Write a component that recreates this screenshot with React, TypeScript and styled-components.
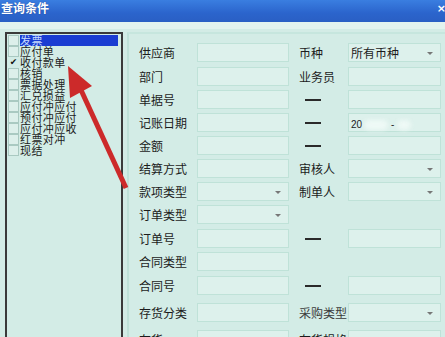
import styled, { createGlobalStyle } from 'styled-components';

const GlobalStyle = createGlobalStyle`
  html, body {
    margin: 0;
    padding: 0;
    background: #d3ece6;
    overflow: hidden;
  }
`;

const Window = styled.div`
  position: relative;
  width: 445px;
  height: 337px;
  overflow: hidden;
  background: #d3ece6;
  font-family: "Noto Sans CJK SC", "Noto Sans", sans-serif;
  color: #1c1c1c;
`;

const TitleBar = styled.div`
  height: 22px;
  display: flex;
  align-items: flex-start;
  justify-content: space-between;
  background: linear-gradient(#3a7ee0, #2b64cc 60%, #2a5fc4);
  color: #fff;
`;

const Title = styled.span`
  font-size: 12px;
  font-weight: bold;
  line-height: 16px;
  padding-left: 1px;
  text-shadow: 0 0 1px #1a3f8a;
`;

const Close = styled.span`
  font-family: "DejaVu Sans", sans-serif;
  font-size: 11px;
  font-weight: bold;
  line-height: 18px;
  margin-right: -1px;
`;

const Body = styled.div`
  display: flex;
  align-items: flex-start;
  padding-top: 10px;
  background: linear-gradient(#e3f3ef 0 7px, #d3ece6 7px);
`;

const ListBox = styled.div`
  margin-left: 5px;
  width: 113px;
  height: 320px;
  border: 2px solid #3a3a3a;
  border-bottom: none;
  padding: 1px 0 0 1px;
  display: flex;
  flex-direction: column;
`;

const Item = styled.div`
  display: flex;
  align-items: center;
  height: 11px;
  font-size: 11px;
  line-height: 11px;
  letter-spacing: 0.4px;
  white-space: nowrap;
`;

const Check = styled.span<{ $checked?: boolean }>`
  box-sizing: border-box;
  width: 11px;
  height: 11px;
  flex: none;
  border: 1px solid ${(p) => (p.$checked ? 'transparent' : '#a9c9c1')};
  background: ${(p) => (p.$checked ? 'transparent' : '#dcefea')};
  display: flex;
  align-items: center;
  justify-content: center;
  font-family: "DejaVu Sans", sans-serif;
  font-size: 9px;
  letter-spacing: 0;
  color: #111;
`;

const ItemText = styled.span<{ $selected?: boolean }>`
  margin-left: 1px;
  flex: ${(p) => (p.$selected ? 1 : 'none')};
  margin-right: ${(p) => (p.$selected ? '3px' : 0)};
  background: ${(p) => (p.$selected ? '#1a3dd2' : 'transparent')};
  color: ${(p) => (p.$selected ? '#c9dcff' : '#1c1c1c')};
  height: 11px;
`;

const Panel = styled.div`
  margin-left: 4px;
  flex: 1;
  height: 320px;
  border-left: 2px solid #bfe2d9;
  border-top: 2px solid #c6e6de;
  padding: 9px 0 0 10px;
`;

const Row = styled.div<{ $extra?: number }>`
  display: grid;
  grid-template-columns: 58px 92px 10px 49px 93px;
  align-items: center;
  height: 19px;
  margin-top: ${(p) => 4 + (p.$extra ?? 0)}px;

  &:first-child {
    margin-top: 0;
  }
`;

const Label = styled.span<{ $soft?: boolean }>`
  font-size: 12px;
  line-height: 14px;
  white-space: nowrap;
  color: ${(p) => (p.$soft ? '#3a3a3a' : '#1c1c1c')};
`;

const Dash = styled.span`
  display: block;
  width: 16px;
  height: 2px;
  margin-left: 6px;
  background: #2a2a2a;
`;

const Box = styled.div<{ $select?: boolean }>`
  position: relative;
  box-sizing: border-box;
  height: 19px;
  background: #ddf1ec;
  border: 1px solid #bfe2d8;
  font-size: 12px;
  line-height: 17px;
  padding-left: 2px;
  white-space: nowrap;

  &::after {
    content: '';
    display: ${(p) => (p.$select ? 'block' : 'none')};
    position: absolute;
    right: 7px;
    top: 8px;
    border-left: 3px solid transparent;
    border-right: 3px solid transparent;
    border-top: 3px solid #777;
  }
`;

const DateText = styled.span`
  font-family: "Liberation Sans", sans-serif;
  font-size: 10px;
`;

const Smudge = styled.span`
  display: inline-block;
  vertical-align: middle;
  height: 10px;
  border-radius: 6px;
  background: #eef9f6;
  filter: blur(2px);
`;

const Arrow = styled.svg`
  position: absolute;
  left: 0;
  top: 0;
  pointer-events: none;
`;

type Field = { kind: 'input' | 'select' | 'date' | 'none'; value?: string };
type RowDef = { left: string; a: Field; right: string; b: Field; extra?: number };

const I: Field = { kind: 'input' };
const S: Field = { kind: 'select' };
const N: Field = { kind: 'none' };

const rows: RowDef[] = [
  { left: '供应商', a: I, right: '币种', b: { kind: 'select', value: '所有币种' } },
  { left: '部门', a: I, right: '业务员', b: I, extra: 1 },
  { left: '单据号', a: I, right: '—', b: I },
  { left: '记账日期', a: I, right: '—', b: { kind: 'date', value: '20' } },
  { left: '金额', a: I, right: '—', b: I },
  { left: '结算方式', a: I, right: '审核人', b: S },
  { left: '款项类型', a: S, right: '制单人', b: S },
  { left: '订单类型', a: S, right: '', b: N },
  { left: '订单号', a: I, right: '—', b: I, extra: 1 },
  { left: '合同类型', a: I, right: '', b: N },
  { left: '合同号', a: I, right: '—', b: I, extra: 1 },
  { left: '存货分类', a: I, right: '采购类型', b: S, extra: 4 },
  { left: '存货', a: I, right: '存货规格', b: I, extra: 4 },
];

const listItems = [
  '发票',
  '应付单',
  '收付款单',
  '核销',
  '票据处理',
  '汇兑损益',
  '应付冲应付',
  '预付冲应付',
  '应付冲应收',
  '红票对冲',
  '现结',
];

function renderField(f: Field) {
  if (f.kind === 'none') return <span />;
  if (f.kind === 'date')
    return (
      <Box>
        <DateText>{f.value}</DateText>
        <Smudge style={{ width: 24, marginLeft: 2 }} />
        <DateText> - </DateText>
        <Smudge style={{ width: 14 }} />
      </Box>
    );
  return <Box $select={f.kind === 'select'}>{f.value}</Box>;
}

export default function App() {
  return (
    <Window>
      <GlobalStyle />
      <TitleBar>
        <Title>查询条件</Title>
        <Close>×</Close>
      </TitleBar>
      <Body>
        <ListBox>
          {listItems.map((name, i) => (
            <Item key={name}>
              <Check $checked={i === 2}>{i === 2 ? '✔' : ''}</Check>
              <ItemText $selected={i === 0}>{name}</ItemText>
            </Item>
          ))}
        </ListBox>
        <Panel>
          {rows.map((r) => (
            <Row key={r.left} $extra={r.extra}>
              <Label>{r.left}</Label>
              {renderField(r.a)}
              <span />
              {r.right === '—' ? <Dash /> : <Label $soft={r.right === '采购类型'}>{r.right}</Label>}
              {renderField(r.b)}
            </Row>
          ))}
        </Panel>
      </Body>
      <Arrow width="445" height="337" viewBox="0 0 445 337">
        <line x1="126" y1="188" x2="81" y2="90" stroke="#cc2a2a" strokeWidth="5" />
        <polygon points="68,66 92,86 70,98" fill="#cc2a2a" />
      </Arrow>
    </Window>
  );
}
